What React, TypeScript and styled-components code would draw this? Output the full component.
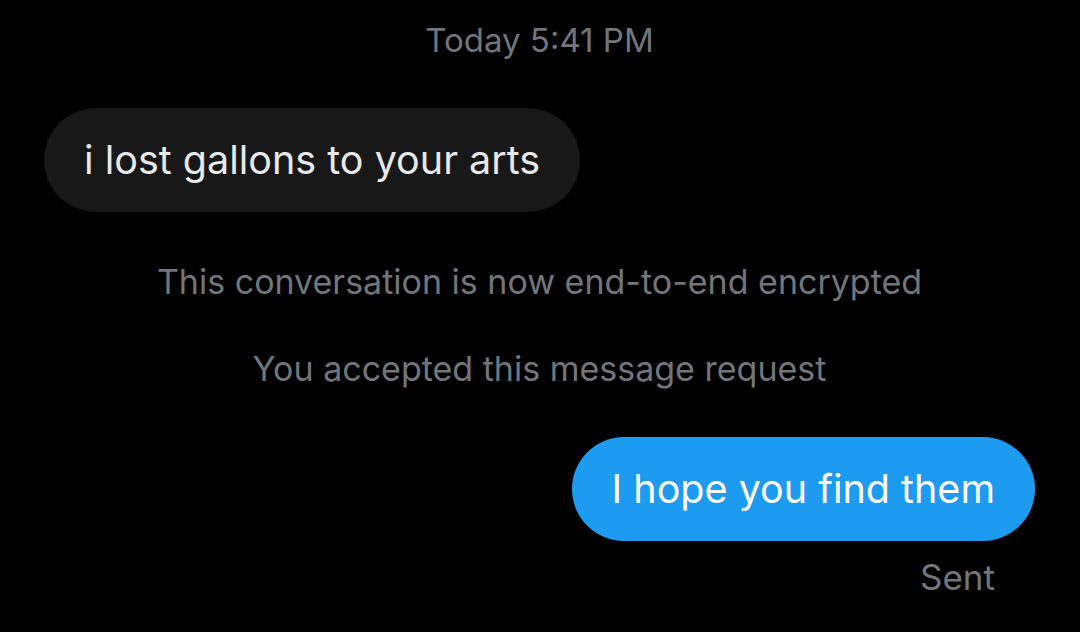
import React from 'react';
import styled, { createGlobalStyle } from 'styled-components';

const GlobalStyle = createGlobalStyle`
  html, body {
    margin: 0;
    padding: 0;
    background: #000000;
  }
  body {
    font-family: Inter, Roboto, 'Noto Sans', sans-serif;
    -webkit-font-smoothing: antialiased;
  }
`;

interface Message {
  id: number;
  kind: 'received' | 'sent' | 'system';
  text: string;
}

const messages: Message[] = [
  { id: 1, kind: 'received', text: 'i lost gallons to your arts' },
  { id: 2, kind: 'system', text: 'This conversation is now end-to-end encrypted' },
  { id: 3, kind: 'system', text: 'You accepted this message request' },
  { id: 4, kind: 'sent', text: 'I hope you find them' },
];

export default function App() {
  return (
    <>
      <GlobalStyle />
      <Thread>
        <Timestamp>Today 5:41 PM</Timestamp>
        {messages.map((m) =>
          m.kind === 'system' ? (
            <SystemNote key={m.id}>{m.text}</SystemNote>
          ) : (
            <BubbleRow key={m.id} $side={m.kind}>
              <Bubble $side={m.kind}>{m.text}</Bubble>
            </BubbleRow>
          )
        )}
        <Status>Sent</Status>
      </Thread>
    </>
  );
}

const Thread = styled.div`
  width: 1080px;
  height: 632px;
  box-sizing: border-box;
  padding: 18px 45px 0 44px;
  display: flex;
  flex-direction: column;
  background: #000000;
  overflow: hidden;
`;

const Timestamp = styled.div`
  text-align: center;
  color: #71767b;
  font-size: 33px;
  line-height: 44px;
  margin-bottom: 46px;
`;

const BubbleRow = styled.div<{ $side: 'received' | 'sent' }>`
  display: flex;
  justify-content: ${({ $side }) => ($side === 'sent' ? 'flex-end' : 'flex-start')};
  margin-bottom: ${({ $side }) => ($side === 'sent' ? '14px' : '48px')};
  margin-top: ${({ $side }) => ($side === 'sent' ? '3px' : '0')};
`;

const Bubble = styled.div<{ $side: 'received' | 'sent' }>`
  height: 104px;
  box-sizing: border-box;
  display: flex;
  align-items: center;
  padding: 0 40px;
  border-radius: 52px;
  font-size: 39.5px;
  color: ${({ $side }) => ($side === 'sent' ? '#ffffff' : '#e7e9ea')};
  background: ${({ $side }) => ($side === 'sent' ? '#1d9bf0' : '#181818')};
  white-space: nowrap;
`;

const SystemNote = styled.div`
  text-align: center;
  color: #71767b;
  font-size: 34px;
  line-height: 44px;
  margin-bottom: 43px;
`;

const Status = styled.div`
  align-self: flex-end;
  margin-right: 40px;
  color: #71767b;
  font-size: 35px;
  line-height: 44px;
`;
